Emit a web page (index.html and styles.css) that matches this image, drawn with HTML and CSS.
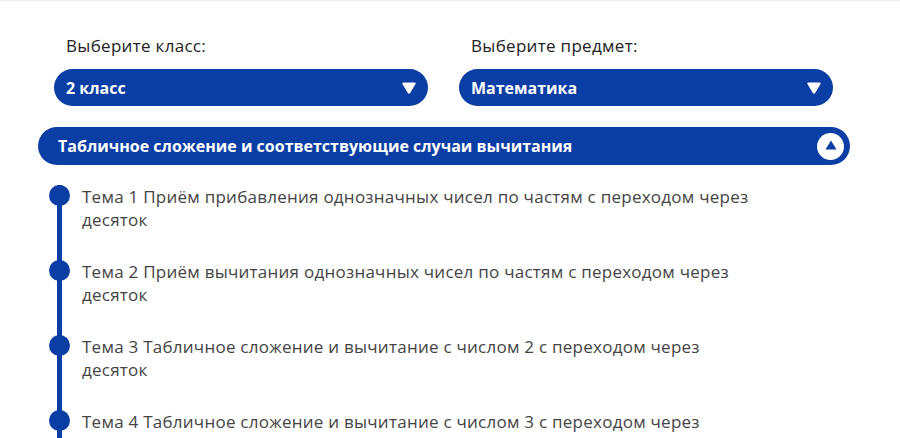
FILE: index.html
```html
<!DOCTYPE html>
<html lang="ru">
<head>
<meta charset="utf-8">
<link rel="stylesheet" href="styles.css">
</head>
<body>
<div class="page">
  <div class="selectors">
    <div class="field">
      <div class="label">Выберите класс:</div>
      <div class="select"><span>2 класс</span>
        <svg class="caret" width="16" height="14" viewBox="0 0 16 14"><path d="M2.5 1.5 H13.5 Q15.5 1.5 14.4 3.3 L9.3 11.7 Q8 13.6 6.7 11.7 L1.6 3.3 Q0.5 1.5 2.5 1.5 Z" fill="#fff"/></svg>
      </div>
    </div>
    <div class="field">
      <div class="label">Выберите предмет:</div>
      <div class="select"><span>Математика</span>
        <svg class="caret" width="16" height="14" viewBox="0 0 16 14"><path d="M2.5 1.5 H13.5 Q15.5 1.5 14.4 3.3 L9.3 11.7 Q8 13.6 6.7 11.7 L1.6 3.3 Q0.5 1.5 2.5 1.5 Z" fill="#fff"/></svg>
      </div>
    </div>
  </div>
  <div class="accordion">
    <span>Табличное сложение и соответствующие случаи вычитания</span>
    <span class="toggle"><svg width="12" height="10" viewBox="0 0 12 10"><path d="M6 0.5 L11.5 9.5 H0.5 Z" fill="#0a3ea4"/></svg></span>
  </div>
  <ul class="timeline">
    <li>Тема 1 Приём прибавления однозначных чисел по частям с переходом через десяток</li>
    <li>Тема 2 Приём вычитания однозначных чисел по частям с переходом через десяток</li>
    <li>Тема 3 Табличное сложение и вычитание с числом 2 с переходом через десяток</li>
    <li>Тема 4 Табличное сложение и вычитание с числом 3 с переходом через десяток</li>
  </ul>
</div>
</body>
</html>
```
FILE: styles.css
```css
* { box-sizing: border-box; }
html, body { margin: 0; padding: 0; background: #fff; }
body {
  font-family: "Open Sans", "Noto Sans", sans-serif;
  border-top: 1px solid #eeeeee;
  height: 438px;
  overflow: hidden;
}
.page { padding: 0 50px 0 38px; }
.selectors {
  display: grid;
  grid-template-columns: 374px 374px;
  column-gap: 31px;
  padding-left: 16px;
  padding-top: 34px;
}
.label {
  font-size: 17px;
  letter-spacing: 0.3px;
  color: #222;
  padding-left: 12px;
  line-height: 22px;
  height: 22px;
}
.select {
  margin-top: 12px;
  height: 37px;
  border-radius: 19px;
  background: #0a3ea4;
  color: #fff;
  font-weight: 700;
  font-size: 16px;
  display: flex;
  align-items: center;
  justify-content: space-between;
  padding: 0 11px 0 12px;
}
.caret { display: block; }
.accordion {
  margin-top: 21px;
  width: 812px;
  height: 38px;
  border-radius: 19px;
  background: #0a3ea4;
  color: #fff;
  font-weight: 700;
  font-size: 16px;
  display: flex;
  align-items: center;
  justify-content: space-between;
  padding: 0 6px 0 20px;
}
.toggle {
  width: 27px;
  height: 27px;
  border-radius: 50%;
  background: #fff;
  display: flex;
  align-items: center;
  justify-content: center;
}
.toggle svg { margin-top: -2px; }
.timeline {
  list-style: none;
  margin: 20px 0 0 0;
  padding: 0;
  position: relative;
}
.timeline::before {
  content: "";
  position: absolute;
  left: 19px;
  top: 0;
  bottom: -200px;
  width: 5px;
  background: #0a3ea4;
}
.timeline li {
  position: relative;
  padding-left: 44px;
  font-size: 17px;
  letter-spacing: 0.25px;
  line-height: 23px;
  color: #444;
  height: 75px;
  width: 724px;
}
.timeline li::before {
  content: "";
  position: absolute;
  left: 11px;
  top: 0;
  width: 21px;
  height: 21px;
  border-radius: 50%;
  background: #0a3ea4;
}
```
